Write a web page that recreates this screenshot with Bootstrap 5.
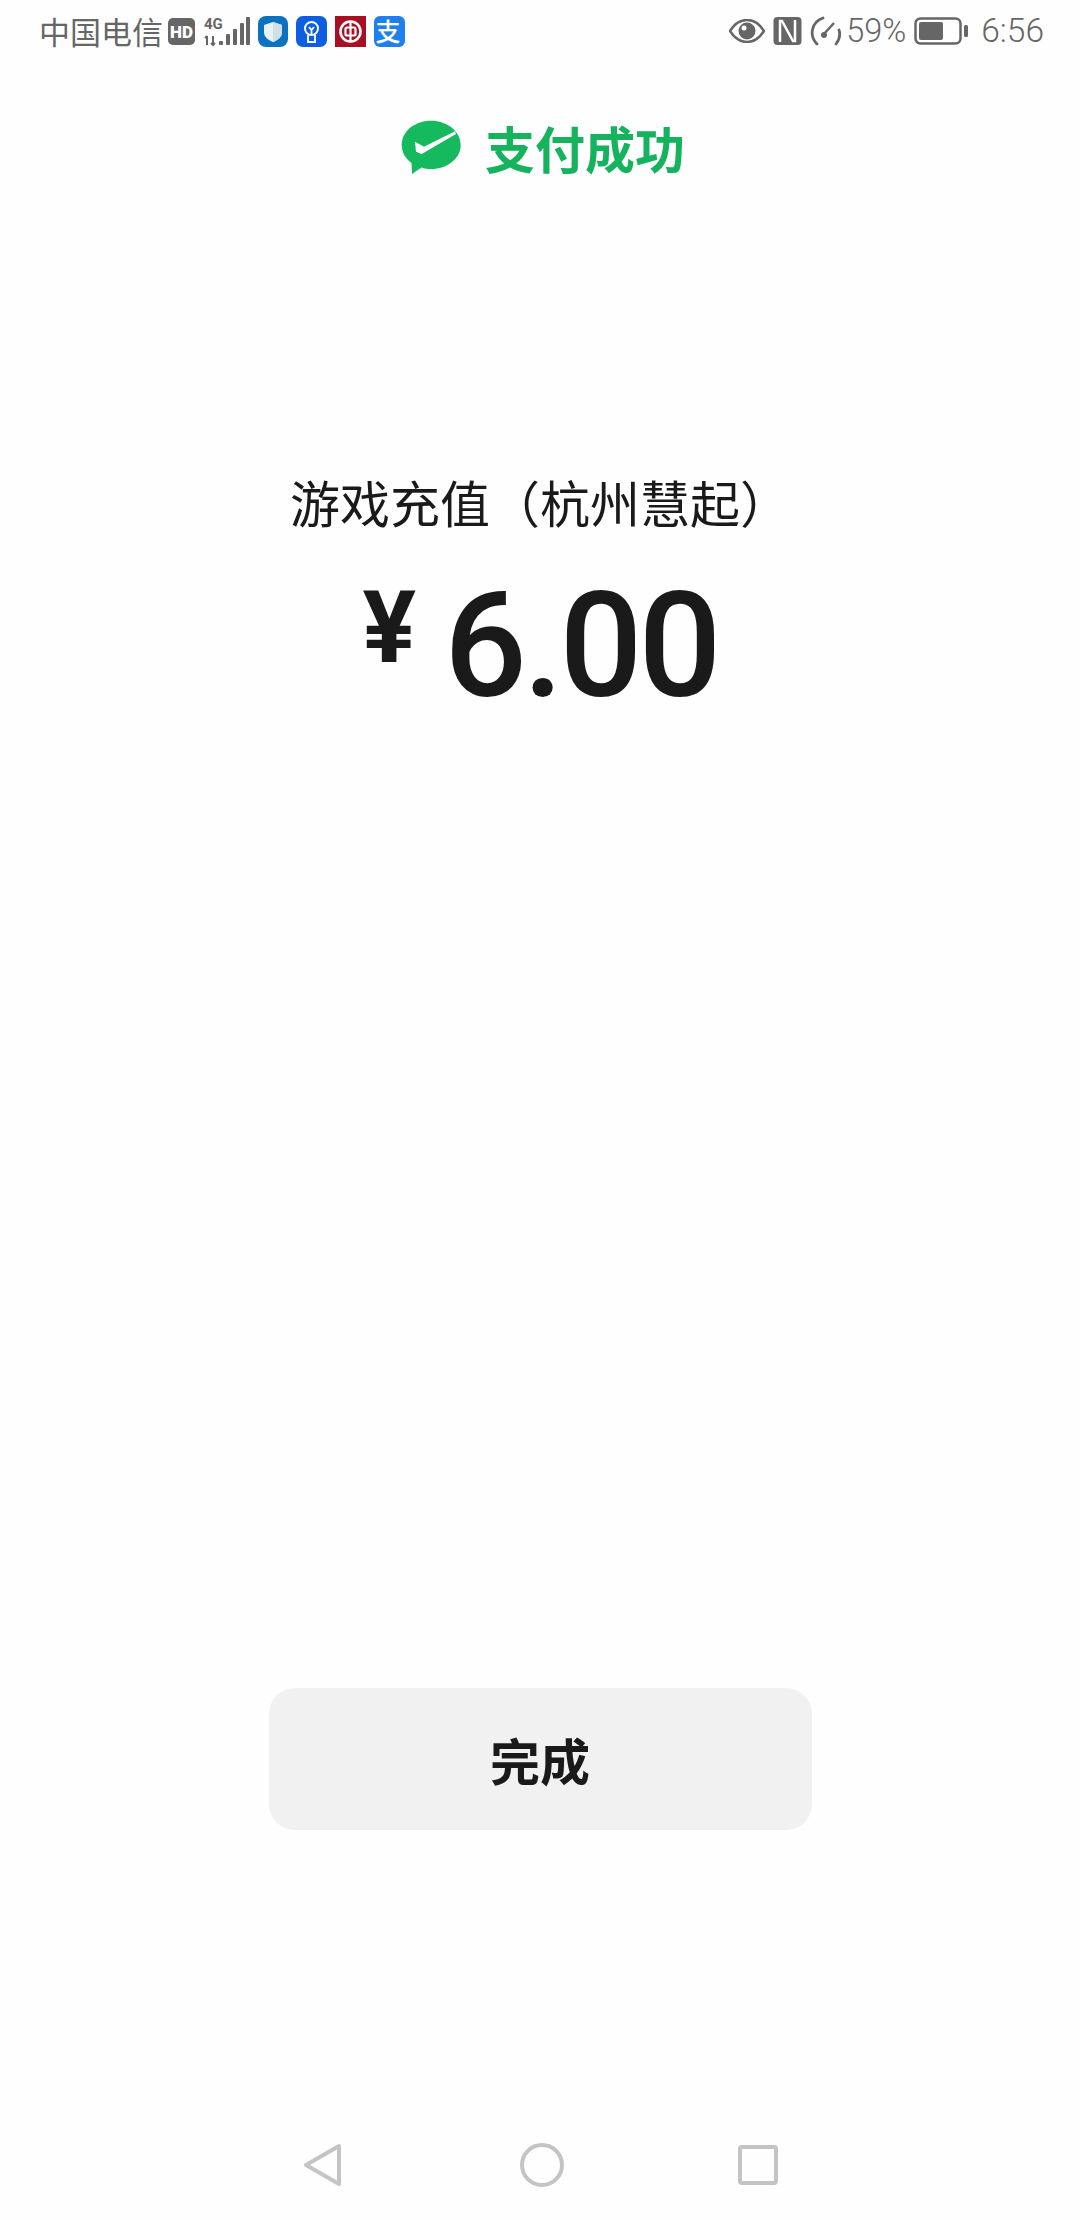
<!DOCTYPE html>
<html lang="zh-CN">
<head>
<meta charset="utf-8">
<title>支付成功</title>
<link href="https://cdn.jsdelivr.net/npm/bootstrap@5.3.0/dist/css/bootstrap.min.css" rel="stylesheet">
<style>
  html, body { margin: 0; background: #fefefe; }
  .phone { width: 1080px; height: 2220px; color: #1a1a1a; font-family: "Noto Sans CJK SC", "Liberation Sans", sans-serif; }
  .sys-bar { height: 62px; padding: 0 36px 0 39px; color: #666; font-size: 31px; line-height: 60px; }
  .sys-rate { font-family: Roboto, "Liberation Sans", sans-serif; font-weight: 300; font-size: 32.500px; }
  .sys-clock { font-family: Roboto, "Liberation Sans", sans-serif; font-weight: 300; font-size: 33.500px; margin-left: 13px; }
  .sys-bar svg { display: block; flex: none; }
  .svg-open { overflow: visible; }
  .pay-head { height: 62px; margin-top: 54px; padding-left: 6px; gap: 24px; color: #16b35f; }
  .pay-title { font-size: 50px; font-weight: 700; line-height: 62px; }
  .merchant { margin-top: 288px; font-size: 50px; line-height: 70px; text-align: center; }
  .amount-row { margin-top: 46px; height: 130px; font-family: Roboto, "Liberation Sans", sans-serif; }
  .amount-sign { font-size: 100px; font-weight: 700; line-height: 92px; margin-right: 28px; }
  .amount-num { font-size: 146px; font-weight: 500; line-height: 130px; letter-spacing: -4px; }
  .done-wrap { margin-top: 976px; }
  .done-btn { width: 543px; height: 142px; background: #f1f1f1; border: 0; border-radius: 26px; color: #1a1a1a; font-size: 50px; font-weight: 700; }
  .done-btn:hover, .done-btn:active { background: #e8e8e8; color: #1a1a1a; }
  .soft-nav { margin-top: 310px; height: 50px; padding-left: 1px; }
  .key-home { margin: 0 172px 0 176px; }
</style>
</head>
<body>
<div class="phone d-flex flex-column">

  <!-- status bar -->
  <div class="sys-bar d-flex align-items-center justify-content-between">
    <div class="d-flex align-items-center">
      <span>中国电信</span>
      <svg class="ms-1" width="29" height="27" viewBox="0 0 29 27"><rect x="1" width="27" height="27" rx="5" fill="#666"/><text x="14.500" y="20" text-anchor="middle" font-family="Roboto, sans-serif" font-weight="900" font-size="17" fill="#fff">HD</text></svg>
      <svg class="ms-2 svg-open" width="46" height="29" viewBox="0 0 46 29">
        <text x="0" y="12" font-family="Roboto, sans-serif" font-weight="700" font-size="15" fill="#666">4G</text>
        <path d="M3 28v-9M1 21l2-2M9 19v9M7 26l2 2 2-2" fill="none" stroke="#666" stroke-width="2"/>
        <g fill="#666"><rect x="15" y="24" width="4" height="4" rx="1"/><rect x="22" y="17" width="4" height="11" rx="1"/><rect x="29" y="12" width="4" height="16" rx="1"/><rect x="36" y="6" width="4" height="22" rx="1"/><rect x="42" y="0" width="4" height="28" rx="1"/></g>
      </svg>
      <svg class="ms-2" width="30" height="31" viewBox="0 0 30 31"><rect width="30" height="31" rx="8" fill="#0a72bf"/><path d="M15 6l9 3v7c0 5-4 8-9 10-5-2-9-5-9-10V9z" fill="#e9f1f7"/><path d="M15 6l9 3v7c0 5-4 8-9 10z" fill="#cfdfec"/></svg>
      <svg class="ms-2" width="31" height="31" viewBox="0 0 31 31"><rect width="31" height="31" rx="7" fill="#0d5ee0"/><circle cx="15.500" cy="12.500" r="6.500" fill="none" stroke="#fff" stroke-width="2"/><path d="M12 19v7h7v-7M13 11l2.500 3 2.500-3M15.500 14v5" fill="none" stroke="#fff" stroke-width="1.800"/></svg>
      <svg class="ms-2" width="31" height="31" viewBox="0 0 31 31"><rect width="31" height="31" fill="#a90f22"/><circle cx="15.500" cy="15.500" r="10" fill="none" stroke="#fff" stroke-width="2.600"/><rect x="10.500" y="11.500" width="10" height="8" rx="1.500" fill="none" stroke="#fff" stroke-width="2.200"/><path d="M15.500 5.500v20" stroke="#fff" stroke-width="2.200"/></svg>
      <svg class="ms-2 svg-open" width="31" height="31" viewBox="0 0 31 31"><rect width="31" height="31" rx="6" fill="#1f7fee"/><text x="14" y="25" text-anchor="middle" font-family="'Noto Sans CJK SC', sans-serif" font-size="25" font-weight="500" fill="#fff">支</text></svg>
    </div>
    <div class="d-flex align-items-center">
      <svg width="36" height="24" viewBox="0 0 36 24"><path d="M1 12C6 4 12 1 18 1s12 3 17 11c-5 8-11 11-17 11S6 20 1 12z" fill="none" stroke="#666" stroke-width="2.500"/><circle cx="18" cy="12" r="8.500" fill="#666"/><circle cx="15" cy="9" r="2.500" fill="#fff"/></svg>
      <svg class="ms-2" width="29" height="28" viewBox="0 0 29 28"><rect x=".5" width="28" height="28" rx="4" fill="#666"/><path d="M7 25V4h2l11 20h2V3" fill="none" stroke="#fff" stroke-width="2.500"/></svg>
      <svg class="ms-2" width="32" height="30" viewBox="0 0 32 30"><path d="M7 28C-1 20 1 6 13 2M29 14c2 6 0 10-3 14" fill="none" stroke="#666" stroke-width="2.800" stroke-linecap="round"/><path d="M13 19L24 7" stroke="#666" stroke-width="2.500"/><circle cx="14" cy="19" r="3" fill="#666"/></svg>
      <span class="sys-rate ms-1">59%</span>
      <svg class="ms-2" width="54" height="28" viewBox="0 0 54 28"><rect x="1.500" y="1.500" width="45" height="25" rx="5" fill="none" stroke="#666" stroke-width="2.500"/><rect x="5" y="5" width="24" height="18" rx="2" fill="#666"/><rect x="50" y="8" width="4" height="12" rx="1.500" fill="#666"/></svg>
      <span class="sys-clock">6:56</span>
    </div>
  </div>

  <!-- result heading -->
  <div class="pay-head d-flex align-items-center justify-content-center">
    <svg width="60" height="56" viewBox="0 0 60 56"><path d="M30 1.700C46.500 1.700 59.700 12.500 59.700 26S46.500 50 30 50c-3.500 0-6.500-.500-9.500-1.500L11 55l-.5-11C4.500 39.500.700 33.500.700 26 .700 12.500 13.500 1.700 30 1.700z" fill="#15ba5e"/><path d="M14 22.700l9 5 31-15.400 1 2.700L20.700 35 15 32.700z" fill="#fff"/></svg>
    <span class="pay-title">支付成功</span>
  </div>

  <!-- merchant and amount -->
  <div class="merchant">游戏充值（杭州慧起）</div>
  <div class="amount-row d-flex justify-content-center">
    <span class="amount-sign">¥</span>
    <span class="amount-num">6.00</span>
  </div>

  <!-- action -->
  <div class="done-wrap d-flex justify-content-center">
    <button type="button" class="btn done-btn">完成</button>
  </div>

  <!-- navigation keys -->
  <div class="soft-nav d-flex align-items-center justify-content-center">
    <svg width="40" height="46" viewBox="0 0 40 46"><path d="M36 4L3 23l33 19z" fill="none" stroke="#c4c4c4" stroke-width="4" stroke-linejoin="round"/></svg>
    <svg class="key-home" width="46" height="46" viewBox="0 0 46 46"><circle cx="23" cy="23" r="20" fill="none" stroke="#c4c4c4" stroke-width="4"/></svg>
    <svg width="42" height="42" viewBox="0 0 42 42"><rect x="3" y="3" width="36" height="36" rx="2" fill="none" stroke="#c4c4c4" stroke-width="4"/></svg>
  </div>
</div>
<script src="https://cdn.jsdelivr.net/npm/bootstrap@5.3.0/dist/js/bootstrap.bundle.min.js"></script>
</body>
</html>
